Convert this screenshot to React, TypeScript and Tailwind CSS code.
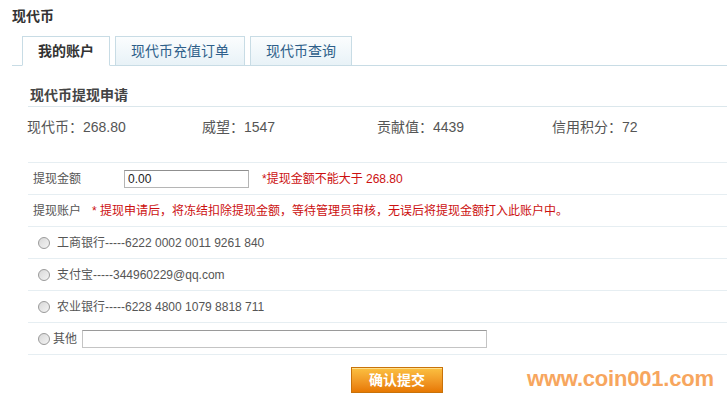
import React from 'react'

const FONT = { fontFamily: '"Liberation Sans", "Noto Sans CJK SC", sans-serif' }

const stats = [
  { label: '现代币', value: '268.80' },
  { label: '威望', value: '1547' },
  { label: '贡献值', value: '4439' },
  { label: '信用积分', value: '72' },
]

const accounts = [
  '工商银行-----6222 0002 0011 9261 840',
  '支付宝-----344960229@qq.com',
  '农业银行-----6228 4800 1079 8818 711',
]

/** Grey radio circle like the old IE/XP one */
function Radio() {
  return (
    <span className="inline-block w-[12px] h-[12px] rounded-full border border-[#9a9a9a] bg-gradient-to-br from-[#d8d8d8] to-[#f4f4f4] shrink-0" />
  )
}

function Tab({ label, active }: { label: string; active?: boolean }) {
  if (active) {
    return (
      <div className="h-[30px] -mb-px px-[15px] flex items-center border border-[#c8dce5] border-b-white bg-white text-[14px] font-bold text-[#333]">
        {label}
      </div>
    )
  }
  return (
    <div className="h-[29px] px-[15px] flex items-center border border-b-0 border-[#c8dce5] bg-gradient-to-b from-[#fbfdfe] to-[#e8f2f7] text-[14px] text-[#2e5f8a]">
      {label}
    </div>
  )
}

export default function App() {
  return (
    <div className="relative w-[727px] h-[408px] bg-white overflow-hidden" style={FONT}>
      {/* Page title */}
      <div className="h-[36px] pl-[12px] pt-[6px] leading-[20px] text-[14px] font-bold text-[#333]">
        现代币
      </div>

      {/* Tabs */}
      <div className="ml-[12px] h-[30px] flex items-end gap-[5px] pl-[10px] border-b border-[#c8dce5]">
        <Tab label="我的账户" active />
        <Tab label="现代币充值订单" />
        <Tab label="现代币查询" />
      </div>

      <div className="ml-[28px]">
        {/* Section title */}
        <div className="pt-[19px] h-[41px] pl-[2px] leading-[20px] text-[14px] font-bold text-[#444] border-b border-[#dbe7ec]">
          现代币提现申请
        </div>

        {/* Stats */}
        <div className="h-[40px] flex items-center -ml-px text-[14px] text-[#555]">
          {stats.map(s => (
            <div key={s.label} className="w-[175px]">
              {s.label}：{s.value}
            </div>
          ))}
        </div>

        {/* Form rows */}
        <div className="mt-[15px] border-t border-[#e6eef2] text-[12px] text-[#555]">
          <div className="h-[32px] flex items-center border-b border-[#e6eef2]">
            <div className="w-[96px] pl-[5px]">提现金额</div>
            <input
              type="text"
              defaultValue="0.00"
              className="w-[125px] h-[18px] px-[3px] border border-[#b5b5b5] border-t-[#8f8f8f] text-[12px] text-[#222] outline-none"
              style={FONT}
            />
            <span className="ml-[13px] text-[#cc1010]">*提现金额不能大于 268.80</span>
          </div>

          <div className="h-[32px] flex items-center border-b border-[#e6eef2]">
            <div className="pl-[5px]">提现账户</div>
            <span className="ml-[11px] text-[#cc1010]">
              * 提现申请后，将冻结扣除提现金额，等待管理员审核，无误后将提现金额打入此账户中。
            </span>
          </div>

          {accounts.map(a => (
            <div key={a} className="h-[32px] flex items-center pl-[10px] gap-[7px] border-b border-[#e6eef2]">
              <Radio />
              <span>{a}</span>
            </div>
          ))}

          <div className="h-[32px] flex items-center pl-[10px] border-b border-[#e6eef2]">
            <Radio />
            <span className="ml-[3px]">其他</span>
            <input
              type="text"
              className="ml-[5px] w-[405px] h-[18px] border border-[#c4c4c4] border-t-[#9a9a9a] outline-none"
            />
          </div>
        </div>
      </div>

      {/* Submit */}
      <div className="mt-[12px] pl-[351px]">
        <button
          type="button"
          className="w-[92px] h-[26px] border border-[#c8720a] bg-gradient-to-b from-[#fbc040] to-[#e77800] text-white text-[14px] font-bold shadow-[inset_0_1px_0_#ffe08a]"
          style={FONT}
        >
          确认提交
        </button>
      </div>

      {/* Watermark */}
      <div className="absolute left-[527px] top-[365px] text-[22px] leading-[28px] font-bold text-[#f7a65e] tracking-[-0.2px]">
        www.coin001.com
      </div>
    </div>
  )
}
